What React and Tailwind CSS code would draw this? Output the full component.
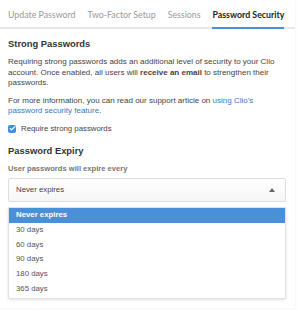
import { Check } from 'lucide-react';

const tabs = ['Update Password', 'Two-Factor Setup', 'Sessions', 'Password Security'];
const options = ['Never expires', '30 days', '60 days', '90 days', '180 days', '365 days'];

const App = () => {
  return (
    <div className="w-[300px] h-[311px] bg-white text-[#333] overflow-hidden" style={{ fontFamily: '"Liberation Sans", Arial, sans-serif' }}>
      <div className="w-[295px] h-[308px] bg-white shadow-[1px_1px_2px_rgba(0,0,0,0.04)]">
        <nav className="flex gap-[12px] pl-2 border-b-2 border-[#e8e8e8] h-[29px] font-['Lato',sans-serif] text-[8.8px] whitespace-nowrap">
          {tabs.map((t, i) => (
            <div
              key={t}
              className={
                i === 3
                  ? 'shrink-0 h-[29px] pt-[8px] font-bold text-[#222] border-b-2 border-[#4a90d9] -mb-[2px]'
                  : 'shrink-0 h-[29px] pt-[8px] text-[#999]'
              }
            >
              {t}
            </div>
          ))}
        </nav>

        <div className="pl-2 pr-[6px]">
          <h2 className="text-[9.4px] font-bold text-[#333] mt-[7px] leading-[15px]">Strong Passwords</h2>
          <p className="text-[8px] leading-[10.5px] text-[#444] mt-[6px]">
            Requiring strong passwords adds an additional level of security to your Clio account. Once enabled, all users will <b>receive an email</b> to strengthen their passwords.
          </p>
          <p className="text-[8px] leading-[10.5px] text-[#444] mt-[7px]">
            For more information, you can read our support article on <span className="text-[#3a78c4]">using Clio's password security feature</span>.
          </p>
          <label className="flex items-center gap-[5px] mt-[6px] h-[12px] text-[7.8px] text-[#444]">
            <span className="w-[8px] h-[8px] rounded-[2px] bg-[#3f8fe0] flex items-center justify-center">
              <Check size={7} strokeWidth={4} className="text-white" />
            </span>
            Require strong passwords
          </label>

          <h2 className="text-[9.4px] font-bold text-[#333] mt-[8px] leading-[15px]">Password Expiry</h2>
          <div className="text-[7.6px] font-bold text-[#777] mt-[5px] leading-[12px]">User passwords will expire every</div>

          <div className="mt-[3px] w-[278px] h-[24px] border border-[#dedede] rounded-[2px] bg-gradient-to-b from-white to-[#f6f6f6] flex items-center justify-between pl-[7px] pr-[10px] text-[7.8px] text-[#444]">
            <span>Never expires</span>
            <span className="w-0 h-0 border-l-[3px] border-r-[3px] border-b-[4px] border-l-transparent border-r-transparent border-b-[#666]" />
          </div>

          <div className="mt-[5px] w-[278px] h-[92px] bg-white border border-[#e2e2e2] rounded-b-[2px] shadow-[0_1px_3px_rgba(0,0,0,0.12)] text-[7.8px] text-[#555]">
            {options.map((o, i) => (
              <div
                key={o}
                className={
                  i === 0
                    ? 'h-[15px] bg-[#4a90d9] text-white font-bold flex items-center pl-[7px]'
                    : 'h-[14.7px] flex items-center pl-[7px]'
                }
              >
                {o}
              </div>
            ))}
          </div>
        </div>
      </div>
    </div>
  );
};

export default App;
